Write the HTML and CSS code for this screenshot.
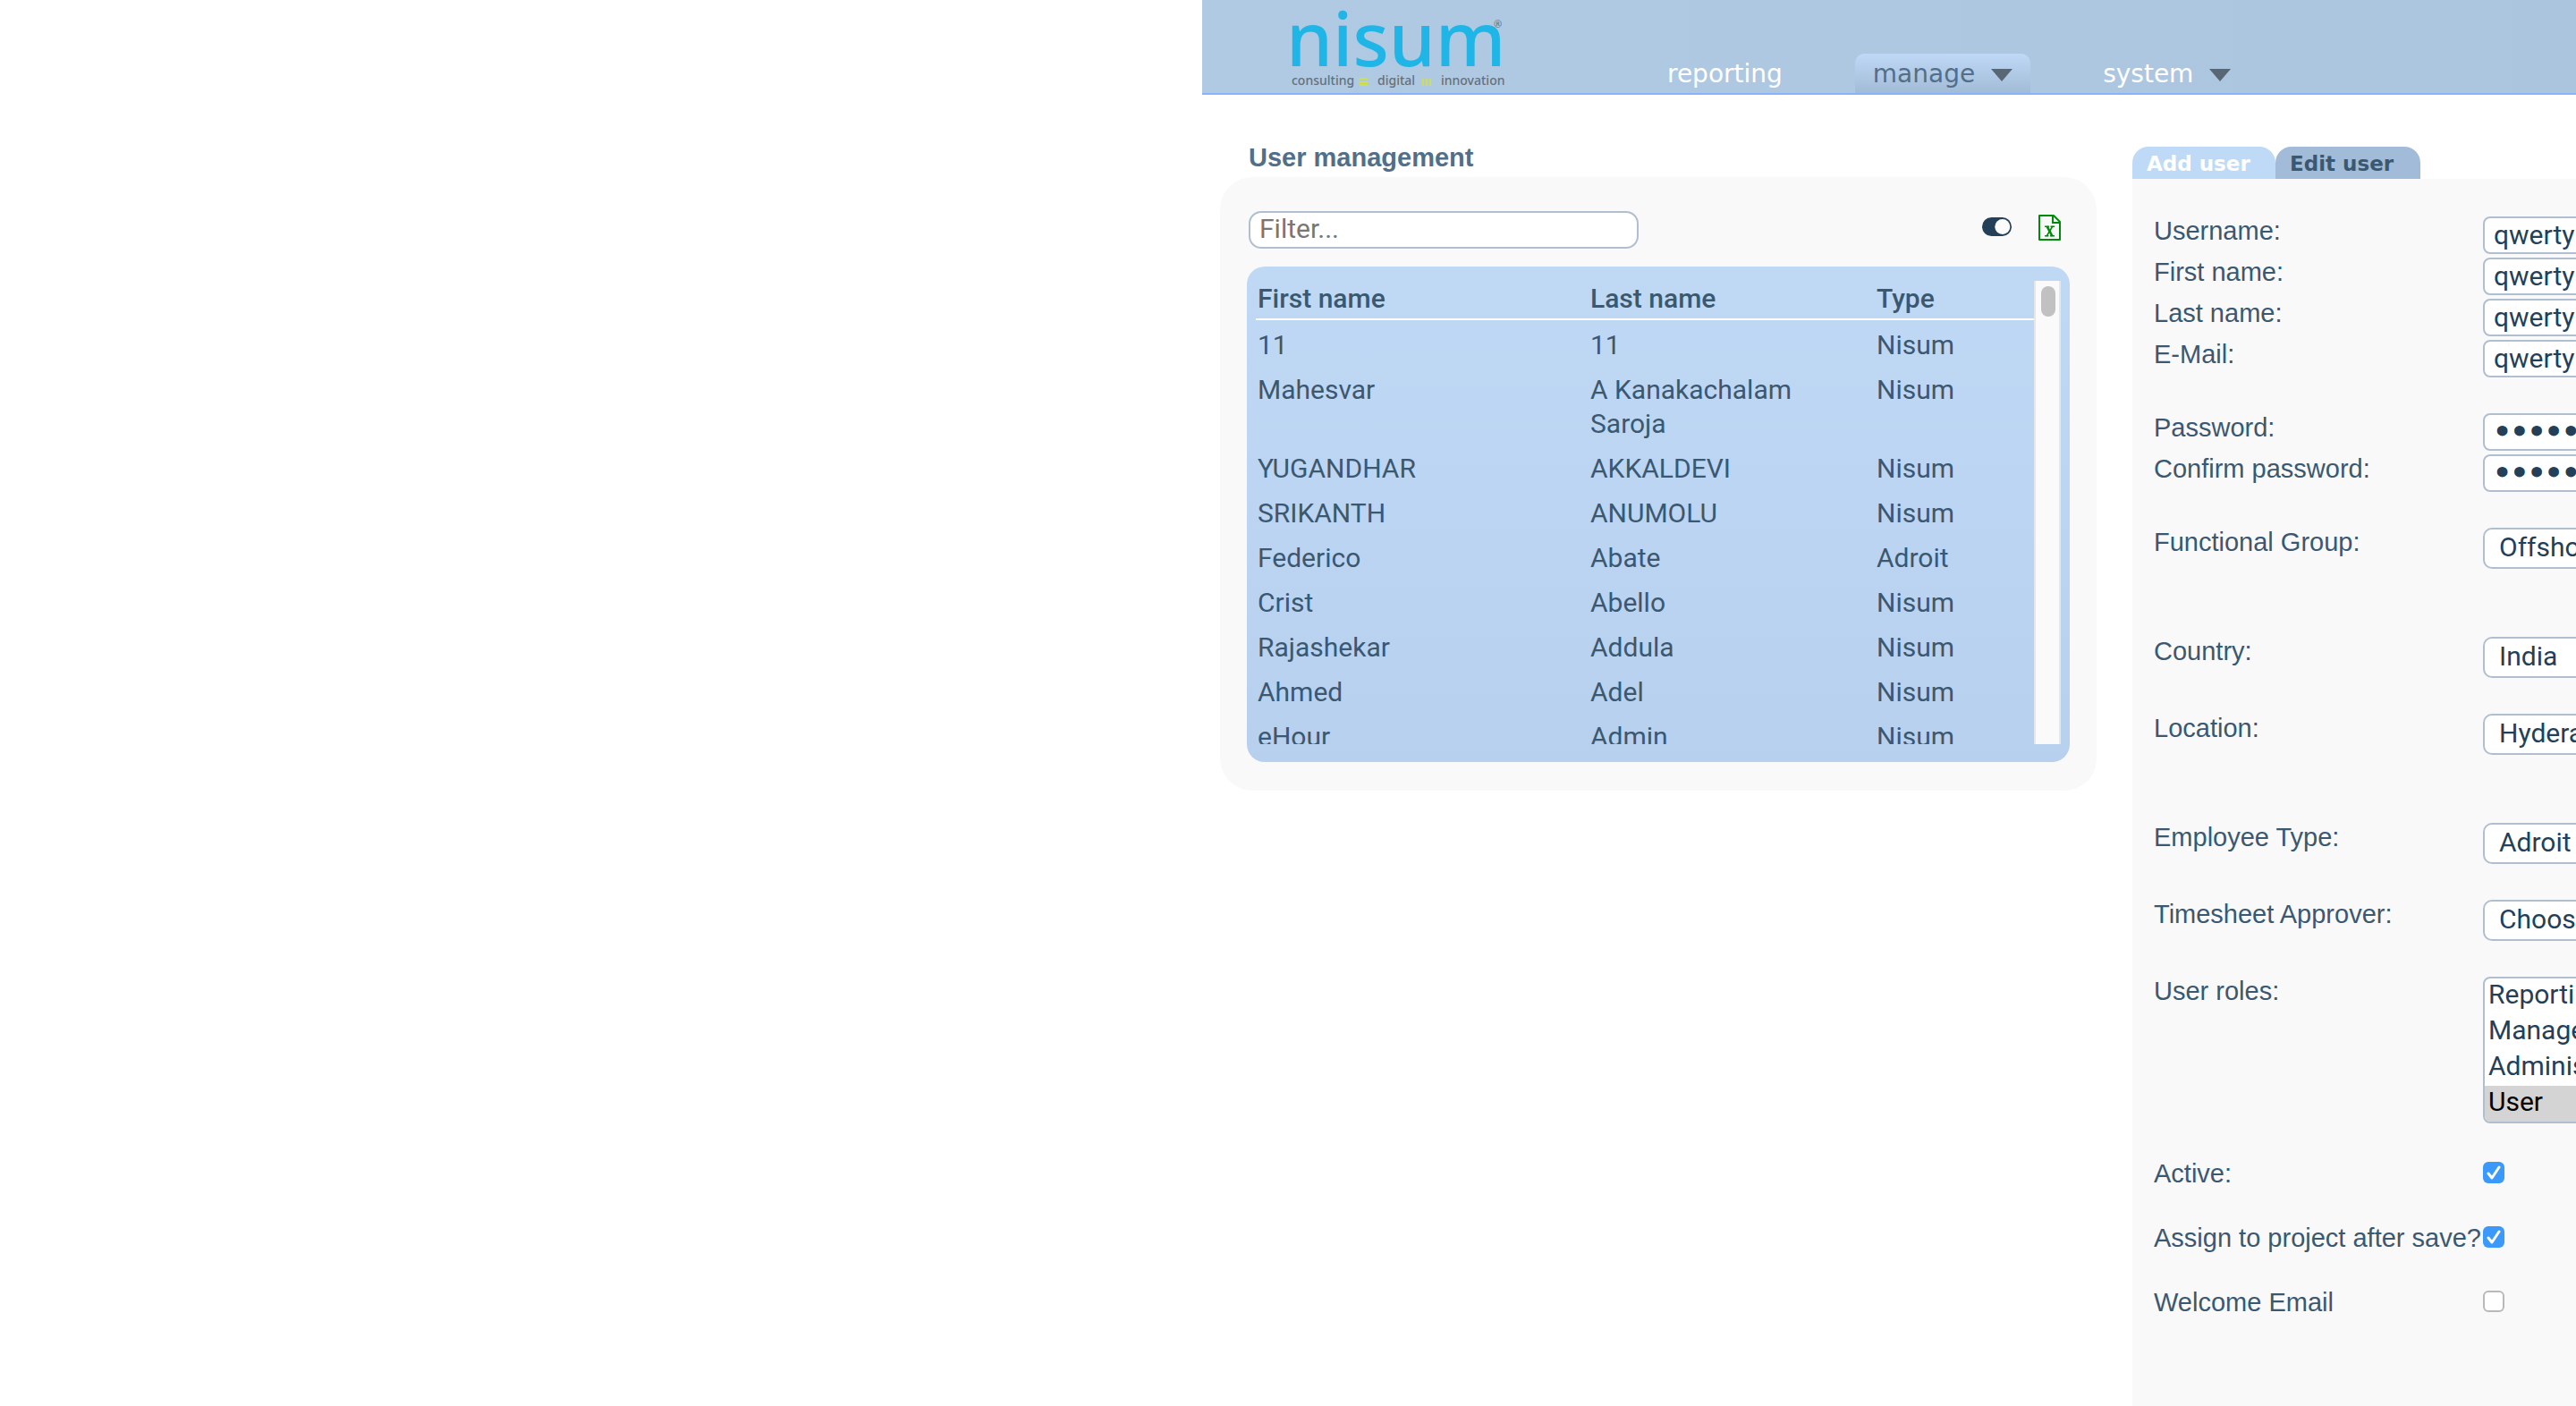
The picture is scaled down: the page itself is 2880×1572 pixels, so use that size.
FILE: index.html
```html
<!DOCTYPE html>
<html lang="en">
<head>
<meta charset="utf-8">
<title>User management</title>
<link rel="stylesheet" href="styles.css">
</head>
<body>
<div class="app">
  <header class="topbar">
    <a class="logo" href="#" aria-label="nisum">
      <svg width="240" height="104" viewBox="0 0 240 104">
        <text class="logo-name" x="-6" y="74">nisum</text>
        <text class="logo-reg" x="226" y="31">®</text>
        <text class="logo-tag" x="0" y="95">consulting</text>
        <text class="logo-tag" x="96" y="95">digital</text>
        <text class="logo-tag" x="167" y="95">innovation</text>
        <path class="logo-bars" d="M76 87h9v2h-9zM76 91h9v2h-9zM76 94h9v2h-9zM146 88h2v8h-2zM150 88h2v8h-2zM154 88h2v8h-2z"/>
      </svg>
    </a>
    <nav class="nav">
      <a class="nav-item" href="#">reporting</a>
      <a class="nav-item nav-active" href="#">manage <svg class="caret" viewBox="0 0 24 14"><path d="M0 0h24L12 14z"/></svg></a>
      <a class="nav-item" href="#">system <svg class="caret" viewBox="0 0 24 14"><path d="M0 0h24L12 14z"/></svg></a>
    </nav>
  </header>

  <main class="content">
    <section class="users">
      <h1 class="title">User management</h1>
      <div class="panel">
        <div class="toolbar">
          <input class="filter" type="text" placeholder="Filter..." aria-label="Filter">
          <div class="tools">
            <button class="tool" type="button" aria-label="Toggle inactive users">
              <svg width="34" height="22" viewBox="0 0 34 22"><rect x="0" y="0" width="33" height="21" rx="10.5" fill="#243f58"/><circle cx="22.8" cy="10.5" r="8.5" fill="#fbfbfb"/></svg>
            </button>
            <button class="tool" type="button" aria-label="Export to Excel">
              <svg width="25" height="29" viewBox="0 0 25 29" fill="none" stroke="#008a0b" stroke-width="2"><path d="M1 1h16l7 7v20H1z" stroke-linejoin="round"/><path d="M16 1v8h8"/><path d="M7 13.2h5M13.5 13.2h4.5M7 23.8h4.5M13 23.8h5" stroke-width="1.6"/><path d="M9.5 13l6 11" stroke-width="2.6"/><path d="M15.8 13l-6.6 11" stroke-width="1.6"/></svg>
            </button>
          </div>
        </div>
        <div class="list">
          <div class="list-scroll">
            <table class="table">
              <colgroup><col class="col-first"><col class="col-last"><col></colgroup>
              <thead><tr><th>First name</th><th>Last name</th><th>Type</th></tr></thead>
              <tbody>
                <tr><td>11</td><td>11</td><td>Nisum</td></tr>
                <tr><td>Mahesvar</td><td>A Kanakachalam Saroja</td><td>Nisum</td></tr>
                <tr><td>YUGANDHAR</td><td>AKKALDEVI</td><td>Nisum</td></tr>
                <tr><td>SRIKANTH</td><td>ANUMOLU</td><td>Nisum</td></tr>
                <tr><td>Federico</td><td>Abate</td><td>Adroit</td></tr>
                <tr><td>Crist</td><td>Abello</td><td>Nisum</td></tr>
                <tr><td>Rajashekar</td><td>Addula</td><td>Nisum</td></tr>
                <tr><td>Ahmed</td><td>Adel</td><td>Nisum</td></tr>
                <tr><td>eHour</td><td>Admin</td><td>Nisum</td></tr>
              </tbody>
            </table>
          </div>
          <div class="scrollbar"><div class="thumb"></div></div>
        </div>
      </div>
    </section>

    <section class="editor">
      <div class="tabs">
        <button class="tab tab-current" type="button">Add user</button>
        <button class="tab" type="button">Edit user</button>
      </div>
      <form class="form">
        <div class="group">
          <div class="row"><label for="username">Username:</label><input class="field" id="username" type="text" value="qwerty"></div>
          <div class="row"><label for="first">First name:</label><input class="field" id="first" type="text" value="qwerty"></div>
          <div class="row"><label for="last">Last name:</label><input class="field" id="last" type="text" value="qwerty"></div>
          <div class="row"><label for="email">E-Mail:</label><input class="field" id="email" type="text" value="qwerty"></div>
        </div>
        <div class="group">
          <div class="row"><label for="pass">Password:</label><input class="field secret" id="pass" type="password" value="qwerty"></div>
          <div class="row"><label for="confirm">Confirm password:</label><input class="field secret" id="confirm" type="password" value="qwerty"></div>
        </div>
        <div class="row with-note"><label for="group">Functional Group:</label><select class="pick" id="group"><option>Offshore</option></select></div>
        <div class="row"><label for="country">Country:</label><select class="pick" id="country"><option>India</option></select></div>
        <div class="row with-note"><label for="location">Location:</label><select class="pick" id="location"><option>Hyderabad</option></select></div>
        <div class="row"><label for="type">Employee Type:</label><select class="pick" id="type"><option>Adroit</option></select></div>
        <div class="row"><label for="approver">Timesheet Approver:</label><select class="pick" id="approver"><option>Choose one</option></select></div>
        <div class="row"><label for="roles">User roles:</label>
          <select class="roles" id="roles" multiple size="4"><option>Reporting</option><option>Manager</option><option>Administrator</option><option selected>User</option></select>
        </div>
        <div class="row"><label for="active">Active:</label><input class="check" id="active" type="checkbox" checked></div>
        <div class="row"><label for="assign">Assign to project after save?</label><input class="check" id="assign" type="checkbox" checked></div>
        <div class="row"><label for="welcome">Welcome Email</label><input class="check" id="welcome" type="checkbox"></div>
      </form>
    </section>
  </main>
</div>
</body>
</html>
```
FILE: styles.css
```css
* { box-sizing: border-box; }

body {
  margin: 0;
  min-height: 100vh;
  display: grid;
  grid-template-columns: minmax(0, 7fr) minmax(0, 8fr);
  background: #fff;
  color: #3b5871;
  font-family: Roboto, sans-serif;
  font-size: 30px;
  overflow-x: hidden;
}

button, input, select { font: inherit; }

.app {
  grid-column: 2;
  display: flex;
  flex-direction: column;
  overflow: hidden;
}

/* Top bar */
.topbar {
  display: flex;
  align-items: flex-end;
  gap: 160px;
  padding-left: 100px;
  border-bottom: 2px solid #8ab2fb;
  background: linear-gradient(90deg, #b1cae4, #abc5de);
}
.logo { display: block; height: 104px; }
.logo svg { overflow: visible; }
.logo-name { font: 500 83px "Noto Sans", sans-serif; fill: #1fb5e6; }
.logo-reg { font: 11px "Noto Sans", sans-serif; fill: #5f6b75; }
.logo-tag { font: 500 14px "Noto Sans", sans-serif; fill: #65707a; }
.logo-bars { fill: #cfdf52; }

.nav { display: flex; gap: 61px; }
.nav-item {
  display: flex;
  align-items: center;
  gap: 18px;
  padding: 2px 20px 0;
  border-radius: 10px 10px 0 0;
  font: 28px/42px "DejaVu Sans", sans-serif;
  color: #fff;
  text-decoration: none;
}
.nav-active { background: linear-gradient(#bfd8f6, #a2bcd7); color: #526f8a; }
.caret { width: 24px; height: 14px; margin-top: 2px; fill: #596775; }

/* Page body */
.content {
  flex: 1;
  display: flex;
  gap: 40px;
  padding: 54px 0 0 20px;
}
.users { flex: 0 0 980px; }
.title {
  margin: 0 0 6px 32px;
  font: bold 29px/32px "Liberation Sans", sans-serif;
  color: #526f8a;
}
.panel {
  padding: 38px 30px 32px;
  border-radius: 36px;
  background: #f9f9f9;
}
.toolbar {
  display: flex;
  justify-content: space-between;
  padding: 0 10px 0 2px;
  margin-bottom: 20px;
}
.filter, .field, .pick, .roles {
  border: 2px solid #b0bfd0;
  background: #fff;
  color: #243f58;
  outline: 0;
}
.filter { width: 436px; height: 42px; padding: 0 10px 4px; border-radius: 14px; }
.filter::placeholder { color: #777; opacity: 1; }
.tools { display: flex; align-items: center; gap: 29px; height: 36px; }
.tool { display: flex; padding: 0; border: 0; background: none; }

.list {
  display: flex;
  height: 554px;
  padding: 16px 10px 20px;
  border-radius: 20px;
  background: linear-gradient(#bfd9f5, #b7d0ee);
}
.list-scroll { flex: 1; overflow: hidden; }
.table { width: 100%; table-layout: fixed; border-collapse: collapse; line-height: 38px; }
.col-first { width: 372px; }
.col-last { width: 320px; }
.table th {
  padding: 1px 2px 3px;
  border-bottom: 2px solid #fff;
  font-weight: 500;
  text-align: left;
}
.table td { padding: 6px 32px 6px 2px; vertical-align: top; }
.table tbody tr:first-child td { padding-top: 9px; }
.scrollbar {
  width: 30px;
  padding: 6px;
  border: 2px solid #e7e7e7;
  border-width: 0 2px;
  background: #fafafa;
}
.thumb { width: 16px; height: 34px; border-radius: 8px; background: #c1c1c1; }

/* User form */
.editor {
  flex: 1;
  min-width: 0;
  display: flex;
  flex-direction: column;
  padding-top: 4px;
}
.tabs { display: flex; }
.tab {
  width: 162px;
  height: 36px;
  padding: 2px 16px 0;
  border: 0;
  border-radius: 18px 18px 0 0;
  background: #a1bbd8;
  color: #3b5871;
  font: bold 23px/34px "DejaVu Sans", sans-serif;
  text-align: left;
  white-space: nowrap;
}
.tab-current { width: 160px; background: #bedaf6; color: #fff; }

.form {
  flex: 1;
  display: flex;
  flex-direction: column;
  gap: 40px;
  padding: 42px 0 42px 24px;
  background: #f9f9f9;
}
.group { display: flex; flex-direction: column; gap: 4px; }
.row {
  display: grid;
  grid-template-columns: 368px 400px;
  align-items: start;
}
.row label { font: 29px/32px "Liberation Sans", sans-serif; white-space: nowrap; }
.with-note { padding-bottom: 36px; }
.field { height: 42px; padding: 0 10px 2px; border-radius: 8px; }
.secret {
  padding-bottom: 0;
  font-family: "Liberation Mono", monospace;
  font-size: 32px;
  -webkit-text-stroke: 3px #243f58;
}
.pick { height: 46px; padding: 0 16px 4px; border-radius: 10px; appearance: none; }
.roles { height: 164px; padding: 0; border-radius: 8px; overflow: hidden; }
.roles option { min-height: 40px; padding: 0 4px; line-height: 38px; }
.roles option:checked { background: linear-gradient(#d4d4d4, #d4d4d4); color: #000; }
.check {
  width: 24px;
  height: 24px;
  margin: 3px 0 0;
  border: 2px solid #b9b9b9;
  border-radius: 6px;
  background: #fff;
  appearance: none;
}
.check:checked {
  border: 0;
  background: #3b99fc url("data:image/svg+xml,%3Csvg xmlns='http://www.w3.org/2000/svg' viewBox='0 0 24 24'%3E%3Cpath d='M6 13l4 5 8-12' fill='none' stroke='white' stroke-width='3' stroke-linecap='round' stroke-linejoin='round'/%3E%3C/svg%3E");
}
```
